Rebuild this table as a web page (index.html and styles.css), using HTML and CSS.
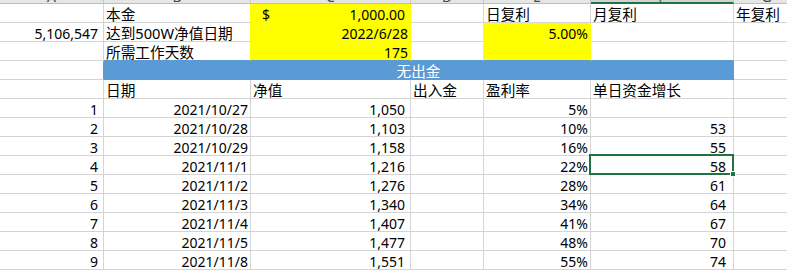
FILE: index.html
```html
<!DOCTYPE html>
<html lang="zh-CN">
<head>
<meta charset="utf-8">
<title>复利表</title>
<link rel="stylesheet" href="styles.css">
</head>
<body>
<div class="colhead">
  <div class="h">A</div><div class="h">B</div><div class="h">C</div><div class="h">D</div><div class="h">E</div><div class="h sel">F</div><div class="h">G</div>
</div>
<div class="sheet">
  <!-- row 1 -->
  <div class="c"></div>
  <div class="c zh yr">本金</div>
  <div class="c y acct"><span>$</span><span>1,000.00</span></div>
  <div class="c"></div>
  <div class="c zh">日复利</div>
  <div class="c zh">月复利</div>
  <div class="c zh">年复利</div>
  <!-- row 2 -->
  <div class="c r p5">5,106,547</div>
  <div class="c zh yr">达到500W净值日期</div>
  <div class="c y r">2022/6/28</div>
  <div class="c yr"></div>
  <div class="c y r">5.00%</div>
  <div class="c"></div>
  <div class="c"></div>
  <!-- row 3 -->
  <div class="c"></div>
  <div class="c zh yr bb">所需工作天数</div>
  <div class="c y r bb">175</div>
  <div class="c yr bb"></div>
  <div class="c y bb"></div>
  <div class="c bb"></div>
  <div class="c"></div>
  <!-- row 4 -->
  <div class="c br"></div>
  <div class="c blue zh">无出金</div>
  <div class="c"></div>
  <!-- row 5 -->
  <div class="c"></div>
  <div class="c zh">日期</div>
  <div class="c zh">净值</div>
  <div class="c zh">出入金</div>
  <div class="c zh">盈利率</div>
  <div class="c zh">单日资金增长</div>
  <div class="c"></div>
  <!-- data -->
  <div class="c r p5">1</div><div class="c r">2021/10/27</div><div class="c r p5">1,050</div><div class="c"></div><div class="c r">5%</div><div class="c r p7"></div><div class="c"></div>
  <div class="c r p5">2</div><div class="c r">2021/10/28</div><div class="c r p5">1,103</div><div class="c"></div><div class="c r">10%</div><div class="c r p7">53</div><div class="c"></div>
  <div class="c r p5">3</div><div class="c r">2021/10/29</div><div class="c r p5">1,158</div><div class="c"></div><div class="c r">16%</div><div class="c r p7">55</div><div class="c"></div>
  <div class="c r p5">4</div><div class="c r">2021/11/1</div><div class="c r p5">1,216</div><div class="c"></div><div class="c r">22%</div><div class="c r p7 active">58<span class="handle"></span></div><div class="c"></div>
  <div class="c r p5">5</div><div class="c r">2021/11/2</div><div class="c r p5">1,276</div><div class="c"></div><div class="c r">28%</div><div class="c r p7">61</div><div class="c"></div>
  <div class="c r p5">6</div><div class="c r">2021/11/3</div><div class="c r p5">1,340</div><div class="c"></div><div class="c r">34%</div><div class="c r p7">64</div><div class="c"></div>
  <div class="c r p5">7</div><div class="c r">2021/11/4</div><div class="c r p5">1,407</div><div class="c"></div><div class="c r">41%</div><div class="c r p7">67</div><div class="c"></div>
  <div class="c r p5">8</div><div class="c r">2021/11/5</div><div class="c r p5">1,477</div><div class="c"></div><div class="c r">48%</div><div class="c r p7">70</div><div class="c"></div>
  <div class="c r p5">9</div><div class="c r">2021/11/8</div><div class="c r p5">1,551</div><div class="c"></div><div class="c r">55%</div><div class="c r p7">74</div><div class="c"></div>
</div>
</body>
</html>
```
FILE: styles.css
```css
html, body {
  margin: 0;
  padding: 0;
  background: #fff;
  overflow: hidden;
}
body {
  font-family: "Noto Sans", "Noto Sans CJK SC", sans-serif;
  font-size: 14px;
  color: #000;
}
.colhead,
.sheet {
  display: grid;
  grid-template-columns: 104px 147px 160px 73px 107px 143px 66px;
}
.colhead {
  margin-top: -16px;
}
.h {
  height: 20px;
  box-sizing: border-box;
  background: #e6e6e6;
  border-right: 1px solid #c6c6c6;
  border-bottom: 1px solid #bdbdbd;
  text-align: center;
  line-height: 25px;
  color: #444;
  overflow: hidden;
}
.h.sel {
  background: #d2d2d2;
  border-bottom: 2px solid #217346;
  color: #217346;
}
.c {
  height: 19px;
  box-sizing: border-box;
  border-right: 1px solid #d4d4d4;
  border-bottom: 1px solid #d4d4d4;
  padding: 0 2px;
  line-height: 21px;
  white-space: nowrap;
  position: relative;
}
.zh {
  font-size: 14.67px;
}
.r {
  text-align: right;
}
.p5 {
  padding-right: 5px;
}
.p7 {
  padding-right: 7px;
}
.y {
  background: #ffff00;
  border-right-color: #ffff00;
  border-bottom-color: #ffff00;
}
.yr {
  border-right-color: #ffff00;
}
.bb {
  border-bottom-color: #5b9bd5;
}
.br {
  border-right-color: #5b9bd5;
}
.acct {
  display: flex;
  justify-content: space-between;
  padding-left: 11px;
  padding-right: 5px;
}
.blue {
  grid-column: 2 / 7;
  background: #5b9bd5;
  border-right-color: #5b9bd5;
  border-bottom-color: #5b9bd5;
  color: #fff;
  text-align: center;
}
.active::before {
  content: "";
  position: absolute;
  left: -2px;
  top: -2px;
  right: -1px;
  bottom: -1px;
  border: 2px solid #217346;
  pointer-events: none;
}
.handle {
  position: absolute;
  right: -3px;
  bottom: -3px;
  width: 4px;
  height: 4px;
  background: #217346;
  border: 1px solid #fff;
  z-index: 2;
}
```
